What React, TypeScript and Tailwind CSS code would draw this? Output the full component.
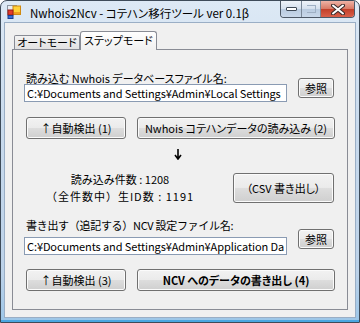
import React from 'react'

const jp = '[font-family:"Noto_Sans_CJK_JP","Liberation_Sans",sans-serif] [font-feature-settings:"palt"]'

function Btn({ className = '', children }: { className?: string; children: React.ReactNode }) {
  return (
    <button
      className={`flex shrink-0 items-center justify-center rounded-[3px] border border-[#707070] bg-[linear-gradient(to_bottom,#f2f2f2_0%,#ebebeb_48%,#dddddd_52%,#cfcfcf_100%)] shadow-[inset_0_0_0_1px_#fbfbfb] text-[11px] leading-none text-black ${className}`}
    >
      {children}
    </button>
  )
}

function TextBox({ value }: { value: string }) {
  return (
    <div className="flex h-[18px] w-[263px] items-center overflow-hidden whitespace-nowrap border border-[#8a9bb3] bg-white pl-[2px] text-[11px] leading-none tracking-[-0.1px] text-black [font-family:'Noto_Sans_CJK_JP',sans-serif]">
      {value}
    </div>
  )
}

function AppIcon() {
  return (
    <svg width="14" height="14" viewBox="0 0 14 14" className="shrink-0">
      <rect x="0.5" y="0.5" width="9" height="9" fill="#e9edf2" stroke="#8c96a3" />
      <rect x="6" y="1" width="7.5" height="8.5" fill="#ffd23a" stroke="#d08a10" />
      <rect x="6.5" y="7" width="6.5" height="2" fill="#f0a020" />
      <rect x="1" y="5" width="5" height="5" fill="#e23a2c" stroke="#9a1d14" />
      <rect x="1" y="10.5" width="5" height="3" fill="#3a6fd8" stroke="#1d3f8f" />
    </svg>
  )
}

function CaptionButtons() {
  return (
    <div className="ml-auto mr-[4px] flex h-[17px] overflow-hidden rounded-b-[4px] border border-t-0 border-[#4d5866]">
      <div className="flex w-[21px] items-center justify-center border-r border-[#7a8898] bg-[linear-gradient(to_bottom,#eef3f9_0%,#d4e0ee_50%,#b9cbe0_52%,#c9d8ea_100%)]">
        <div className="h-[4px] w-[11px] rounded-[1px] border border-[#3f4a57] bg-white" />
      </div>
      <div className="flex w-[19px] items-center justify-center border-r border-[#7a8898] bg-[linear-gradient(to_bottom,#eef3f9_0%,#d4e0ee_50%,#b9cbe0_52%,#c9d8ea_100%)]">
        <div className="h-[8px] w-[9px] border border-[#9fb0c4] border-l-0 bg-transparent" />
      </div>
      <div className="flex w-[33px] items-center justify-center bg-[linear-gradient(to_bottom,#eeb3a6_0%,#d97a66_48%,#c2402a_52%,#d9604a_100%)]">
        <svg width="14" height="11" viewBox="0 0 14 11">
          <path d="M2 1.5 L12 9.5 M12 1.5 L2 9.5" stroke="#3b2b2b" strokeWidth="4" strokeLinecap="round" />
          <path d="M2 1.5 L12 9.5 M12 1.5 L2 9.5" stroke="#ffffff" strokeWidth="2" strokeLinecap="round" />
        </svg>
      </div>
    </div>
  )
}

export default function App() {
  return (
    <div className="flex h-[323px] w-[360px] flex-col overflow-hidden rounded-t-[7px] border border-[#3e4b59] bg-[linear-gradient(to_bottom,#dde9f5_0%,#c8daed_40%,#bcd2e9_85%,#9cc6e8_100%)] shadow-[inset_0_-2px_0_#4aa6e0]">
      {/* title bar */}
      <div className="flex h-[21px] shrink-0 items-start">
        <div className="ml-[6px] mt-[4px]">
          <AppIcon />
        </div>
        <div className={`ml-[9px] mt-[5px] text-[11.5px] leading-[14px] text-black ${jp}`}>
          Nwhois2Ncv - コテハン移行ツール ver 0.1β
        </div>
        <CaptionButtons />
      </div>

      {/* client */}
      <div className={`mx-[3px] h-[296px] shrink-0 border border-[#9aaec5] bg-[#f0f0f0] ${jp}`}>
        {/* tabs */}
        <div className="flex h-[26px] items-end pl-[9px]">
          <div className="flex h-[14px] w-[66px] items-center justify-center rounded-t-[2px] border border-b-0 border-[#898c95] bg-[linear-gradient(to_bottom,#f3f3f3,#e2e2e2)] text-[11px] leading-none text-black">
            オートモード
          </div>
          <div className="relative z-10 -mb-px flex h-[19px] w-[77px] items-center justify-center rounded-t-[3px] border border-b-0 border-[#898c95] bg-[linear-gradient(to_bottom,#ffffff,#f0f0f0)] pb-[1px] text-[11px] leading-none text-black">
            ステップモード
          </div>
        </div>

        {/* tab page */}
        <div className="ml-[7px] h-[261px] w-[336px] border border-[#898c95] bg-[#f0f0f0] pl-[11px] pt-[22px] text-[11px] text-black">
          {/* source file */}
          <div className="flex">
            <div className="flex flex-col">
              <div className="ml-[2px] h-[12px] leading-[12px]">読み込む Nwhois データベースファイル名:</div>
              <TextBox value="C:¥Documents and Settings¥Admin¥Local Settings" />
            </div>
            <Btn className="ml-[11px] mt-[6px] h-[20px] w-[36px]">参照</Btn>
          </div>

          <div className="mt-[15px] flex">
            <Btn className="ml-[2px] h-[22px] w-[100px]">↑自動検出 (1)</Btn>
            <Btn className="ml-[11px] h-[22px] w-[198px]">Nwhois コテハンデータの読み込み (2)</Btn>
          </div>

          {/* arrow */}
          <div className="mt-[9px] flex h-[12px] items-center pl-[150px]">
            <svg width="8" height="11" viewBox="0 0 8 11">
              <path d="M4 0 V9 M1 6 L4 10 L7 6" stroke="#000" strokeWidth="1.6" fill="none" />
            </svg>
          </div>

          {/* counts */}
          <div className="mt-[11px] flex">
            <div className="w-[192px] text-center leading-[17px] [font-feature-settings:normal]">
              <div>読み込み件数 : 1208</div>
              <div className="tracking-[1px]">（全件数中）生ID数 : 1191</div>
            </div>
            <Btn className="ml-[17px] mt-[2px] h-[30px] w-[101px]">（CSV 書き出し）</Btn>
          </div>

          {/* destination file */}
          <div className="mt-[14px] flex">
            <div className="flex flex-col">
              <div className="ml-[2px] h-[12px] leading-[12px] tracking-[-0.3px] [font-feature-settings:normal]">
                書き出す（追記する）NCV 設定ファイル名:
              </div>
              <div className="mt-[6px]">
                <TextBox value="C:¥Documents and Settings¥Admin¥Application Da" />
              </div>
            </div>
            <Btn className="ml-[11px] mt-[10px] h-[20px] w-[36px]">参照</Btn>
          </div>

          <div className="mt-[14px] flex">
            <Btn className="ml-[2px] h-[22px] w-[100px]">↑自動検出 (3)</Btn>
            <Btn className="ml-[11px] h-[22px] w-[198px] font-bold">NCV へのデータの書き出し (4)</Btn>
          </div>
        </div>
      </div>
    </div>
  )
}
